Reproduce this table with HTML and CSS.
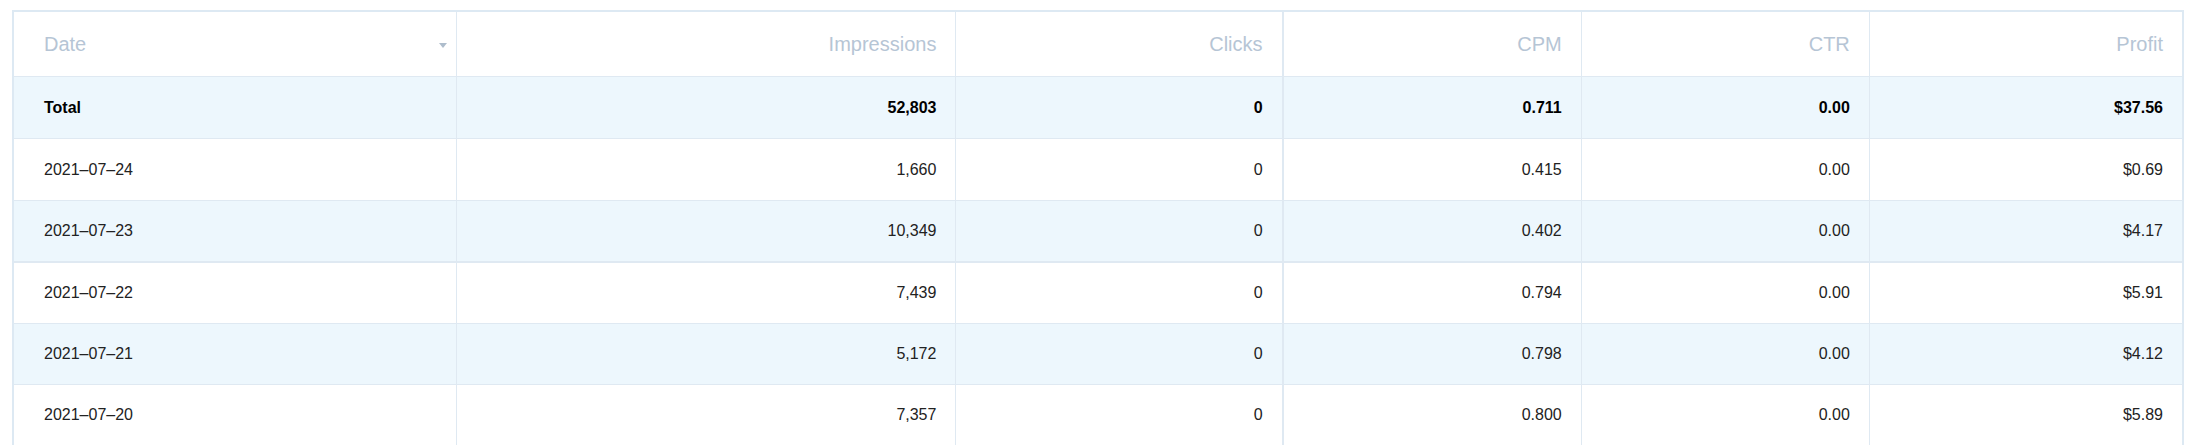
FILE: index.html
```html
<!DOCTYPE html>
<html lang="en">
<head>
<meta charset="utf-8">
<title>Report</title>
<link rel="stylesheet" href="styles.css">
</head>
<body>
<div class="page">
  <table class="report">
    <colgroup>
      <col class="c-date">
      <col class="c-imp">
      <col class="c-clicks">
      <col class="c-cpm">
      <col class="c-ctr">
      <col class="c-profit">
    </colgroup>
    <thead>
      <tr class="head-row">
        <th class="col-date"><div class="date-head"><span>Date</span><span class="sort-arrow"></span></div></th>
        <th>Impressions</th>
        <th class="split">Clicks</th>
        <th>CPM</th>
        <th>CTR</th>
        <th class="last">Profit</th>
      </tr>
    </thead>
    <tbody>
      <tr class="row total alt">
        <td class="col-date">Total</td>
        <td>52,803</td>
        <td class="split">0</td>
        <td>0.711</td>
        <td>0.00</td>
        <td class="last">$37.56</td>
      </tr>
      <tr class="row">
        <td class="col-date">2021–07–24</td>
        <td>1,660</td>
        <td class="split">0</td>
        <td>0.415</td>
        <td>0.00</td>
        <td class="last">$0.69</td>
      </tr>
      <tr class="row alt strong-bottom">
        <td class="col-date">2021–07–23</td>
        <td>10,349</td>
        <td class="split">0</td>
        <td>0.402</td>
        <td>0.00</td>
        <td class="last">$4.17</td>
      </tr>
      <tr class="row short">
        <td class="col-date">2021–07–22</td>
        <td>7,439</td>
        <td class="split">0</td>
        <td>0.794</td>
        <td>0.00</td>
        <td class="last">$5.91</td>
      </tr>
      <tr class="row alt short">
        <td class="col-date">2021–07–21</td>
        <td>5,172</td>
        <td class="split">0</td>
        <td>0.798</td>
        <td>0.00</td>
        <td class="last">$4.12</td>
      </tr>
      <tr class="row short">
        <td class="col-date">2021–07–20</td>
        <td>7,357</td>
        <td class="split">0</td>
        <td>0.800</td>
        <td>0.00</td>
        <td class="last">$5.89</td>
      </tr>
    </tbody>
  </table>
</div>
</body>
</html>
```

FILE: styles.css
```css
html, body {
  margin: 0;
  padding: 0;
  background: #ffffff;
}

body {
  font-family: "Liberation Sans", Arial, sans-serif;
  color: #222222;
  overflow: hidden;
}

.page {
  padding: 10px 0 0 12px;
}

.report {
  table-layout: fixed;
  width: 2172px;
  border-collapse: separate;
  border-spacing: 0;
  border: 2px solid #dde9f3;
  border-bottom: none;
}

.c-date { width: 443px; }
.c-imp { width: 499px; }
.c-clicks { width: 327px; }
.c-cpm { width: 298px; }
.c-ctr { width: 288px; }
.c-profit { width: 312px; }

.report th,
.report td {
  box-sizing: border-box;
  text-align: right;
  vertical-align: middle;
  padding: 0 19px 0 10px;
  border-right: 1px solid #dfe9f2;
  border-bottom: 1px solid #dfe9f2;
  white-space: nowrap;
}

.report th.last,
.report td.last {
  border-right: none;
}

.report th.split,
.report td.split {
  border-right-width: 2px;
}

.report .col-date {
  text-align: left;
  padding-left: 30px;
  padding-right: 9px;
}

.head-row th {
  height: 65px;
  font-size: 20px;
  font-weight: normal;
  color: #b6c5d5;
}

.date-head {
  display: flex;
  align-items: center;
  justify-content: space-between;
}

.sort-arrow {
  width: 0;
  height: 0;
  border-left: 4px solid transparent;
  border-right: 4px solid transparent;
  border-top: 5px solid #aebdcc;
  margin-top: 2px;
}

.row td {
  height: 62px;
  font-size: 16px;
}

.row.short td {
  height: 61px;
}

.row.strong-bottom td {
  border-bottom-width: 2px;
}

.row.alt td {
  background: #edf7fd;
}

.row.total td {
  font-weight: bold;
  color: #000000;
}
```
